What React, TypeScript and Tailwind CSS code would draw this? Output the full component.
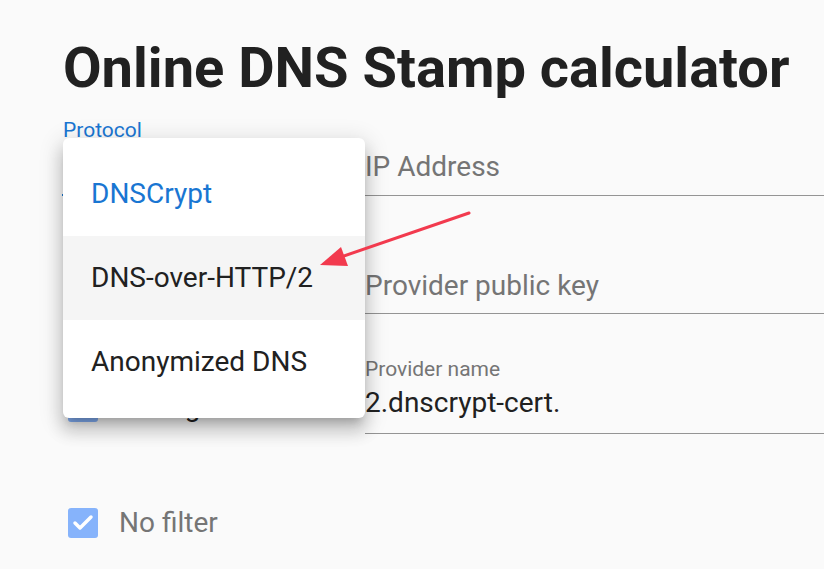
import { Check } from 'lucide-react';

function Checkbox({ label, dim }: { label: string; dim?: boolean }) {
  return (
    <div className="flex items-center pl-[5px]">
      <div className="w-[30px] h-[30px] rounded-[3px] bg-[#86b3fb] flex items-center justify-center">
        <Check className="w-[24px] h-[24px] text-white" strokeWidth={3.5} />
      </div>
      <span className={`ml-[21px] text-[28px] leading-[30px] ${dim ? 'text-[#757575]' : 'text-[#212121]'}`}>{label}</span>
    </div>
  );
}

export default function App() {
  const options = ['DNSCrypt', 'DNS-over-HTTP/2', 'Anonymized DNS'];

  return (
    <div className="min-h-screen bg-[#fafafa] relative overflow-hidden font-['Roboto',sans-serif]">
      <div className="pl-[63px] pt-[40px]">
        <h1 className="text-[56px] leading-[56px] font-bold text-[#212121] whitespace-nowrap">
          Online DNS Stamp calculator
        </h1>

        <div className="relative mt-[22px] grid grid-cols-[282px_1fr] gap-x-[20px] grid-rows-[78px_118px_120px_118px]">
          {/* Protocol select (value sits under the open menu) */}
          <div className="flex flex-col pt-[1px]">
            <span className="text-[21px] leading-[22px] text-[#1976d2]">Protocol</span>
            <div className="mt-auto border-b-2 border-[#1976d2] h-[44px] -ml-[1px]" />
          </div>

          {/* IP Address */}
          <div className="flex flex-col justify-end">
            <div className="border-b border-[#949494] pb-[13px] text-[28px] leading-[30px] text-[#757575]">
              IP Address
            </div>
          </div>

          <div className="pt-[78px] pl-[5px]">
            <div className="w-[30px] h-[30px] rounded-[3px] bg-[#86b3fb]" />
          </div>

          {/* Provider public key */}
          <div className="flex flex-col justify-end">
            <div className="border-b border-[#949494] pb-[12px] text-[28px] leading-[30px] text-[#757575]">
              Provider public key
            </div>
          </div>

          <div className="pt-[78px]">
            <Checkbox label="No logs" />
          </div>

          {/* Provider name */}
          <div className="flex flex-col justify-end border-b border-[#949494] pb-[15px]">
            <span className="text-[21px] leading-[22px] text-[#757575]">Provider name</span>
            <span className="mt-[8px] text-[28px] leading-[30px] text-[#212121]">2.dnscrypt-cert.</span>
          </div>

          <div className="pt-[74px]">
            <Checkbox label="No filter" dim />
          </div>
          <div />

          {/* Open menu */}
          <div className="absolute left-0 top-[20px] w-[302px] bg-white rounded-[6px] py-[14px] shadow-[0_8px_8px_-5px_rgba(0,0,0,0.2),0_13px_16px_2px_rgba(0,0,0,0.14),0_5px_22px_4px_rgba(0,0,0,0.12)]">
            {options.map((opt, i) => (
              <div
                key={opt}
                className={`h-[84px] flex items-center pl-[28px] text-[28px] leading-[30px] ${
                  i === 0 ? 'text-[#1976d2]' : 'text-[#212121]'
                } ${i === 1 ? 'bg-[#f5f5f5]' : ''}`}
              >
                {opt}
              </div>
            ))}
          </div>
        </div>
      </div>

      {/* annotation arrow */}
      <svg className="absolute left-0 top-0 w-[824px] h-[569px] pointer-events-none" viewBox="0 0 824 569">
        <line x1="469" y1="213" x2="338" y2="258" stroke="#f23a4e" strokeWidth="3" strokeLinecap="round" />
        <polygon points="320,265 341,247 348,266" fill="#f23a4e" />
      </svg>
    </div>
  );
}
